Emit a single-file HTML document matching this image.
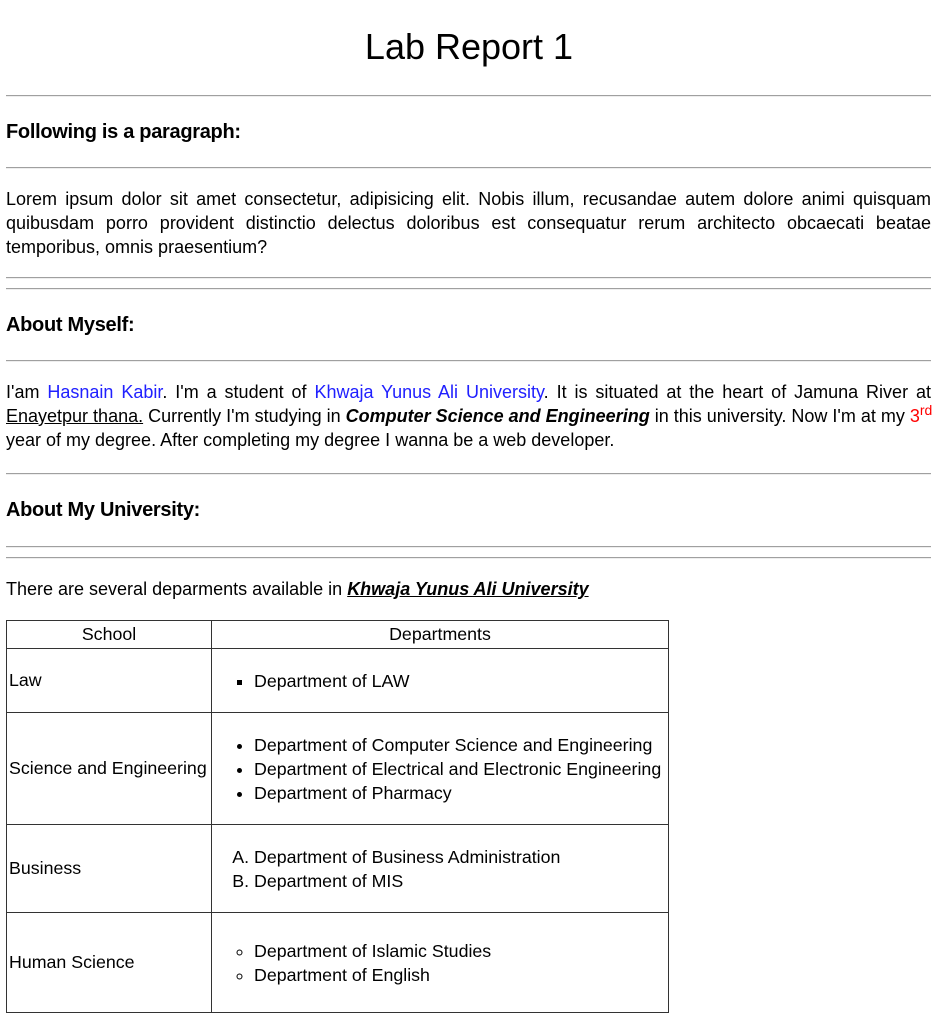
<!DOCTYPE html>
<html><head><meta charset="utf-8"><style>
body{margin:0;width:938px;height:952px;overflow:hidden;background:#fff;font-family:"Liberation Sans",Arial,sans-serif;color:#000;position:relative}
.hr{position:absolute;left:6px;width:925px;height:1px;background:#a0a0a0;border-bottom:1px solid #eee}
h1{position:absolute;top:26px;left:0;width:938px;text-align:center;margin:0;font-size:36px;font-weight:normal;line-height:42px}
h3{position:absolute;left:6px;margin:0;font-size:20px;line-height:24px;font-weight:bold;letter-spacing:-0.3px}
p{position:absolute;left:6px;width:925px;margin:0;font-size:18px;line-height:24px;white-space:nowrap}
p .j{display:block;text-align:justify;text-align-last:justify}
.b{color:#2020ff}
sup{color:red;font-size:14px;line-height:0}
table{position:absolute;left:6px;top:620px;border-collapse:collapse;width:662px;table-layout:fixed;font-size:17.8px}
td,th{border:1px solid #333;padding:0 2px;white-space:nowrap;overflow:visible}
th{font-weight:normal;height:27px}
ul,ol{margin:0;padding-left:40px;line-height:24px}
</style></head><body>
<h1>Lab Report 1</h1>
<div class="hr" style="top:95px"></div>
<h3 style="top:120px">Following is a paragraph:</h3>
<div class="hr" style="top:167px"></div>
<p style="top:187px"><span class="j">Lorem ipsum dolor sit amet consectetur, adipisicing elit. Nobis illum, recusandae autem dolore animi quisquam</span><span class="j">quibusdam porro provident distinctio delectus doloribus est consequatur rerum architecto obcaecati beatae</span>temporibus, omnis praesentium?</p>
<div class="hr" style="top:277px"></div>
<div class="hr" style="top:288px"></div>
<h3 style="top:313px">About Myself:</h3>
<div class="hr" style="top:360px"></div>
<p style="top:380px"><span class="j">I'am <span class="b">Hasnain Kabir</span>. I'm a student of <span class="b">Khwaja Yunus Ali University</span>. It is situated at the heart of Jamuna River at</span><span class="j" style="width:921px"><u>Enayetpur thana.</u> Currently I'm studying in <b><i>Computer Science and Engineering</i></b> in this university. Now I'm at my <span style="color:red">3</span><sup>rd</sup></span>year of my degree. After completing my degree I wanna be a web developer.</p>
<div class="hr" style="top:473px"></div>
<h3 style="top:498px">About My University:</h3>
<div class="hr" style="top:546px"></div>
<div class="hr" style="top:557px"></div>
<p style="top:577px">There are several deparments available in <b><i><u>Khwaja Yunus Ali University</u></i></b></p>
<table>
<colgroup><col style="width:205px"><col style="width:457px"></colgroup>
<tr><th>School</th><th>Departments</th></tr>
<tr style="height:64px"><td>Law</td><td><ul style="list-style:square"><li>Department of LAW</li></ul></td></tr>
<tr style="height:112px"><td>Science and Engineering</td><td><ul><li>Department of Computer Science and Engineering</li><li>Department of Electrical and Electronic Engineering</li><li>Department of Pharmacy</li></ul></td></tr>
<tr style="height:88px"><td>Business</td><td><ol type="A"><li>Department of Business Administration</li><li>Department of MIS</li></ol></td></tr>
<tr style="height:100px"><td>Human Science</td><td><ul style="list-style:circle"><li>Department of Islamic Studies</li><li>Department of English</li></ul></td></tr>
</table>
</body></html>
